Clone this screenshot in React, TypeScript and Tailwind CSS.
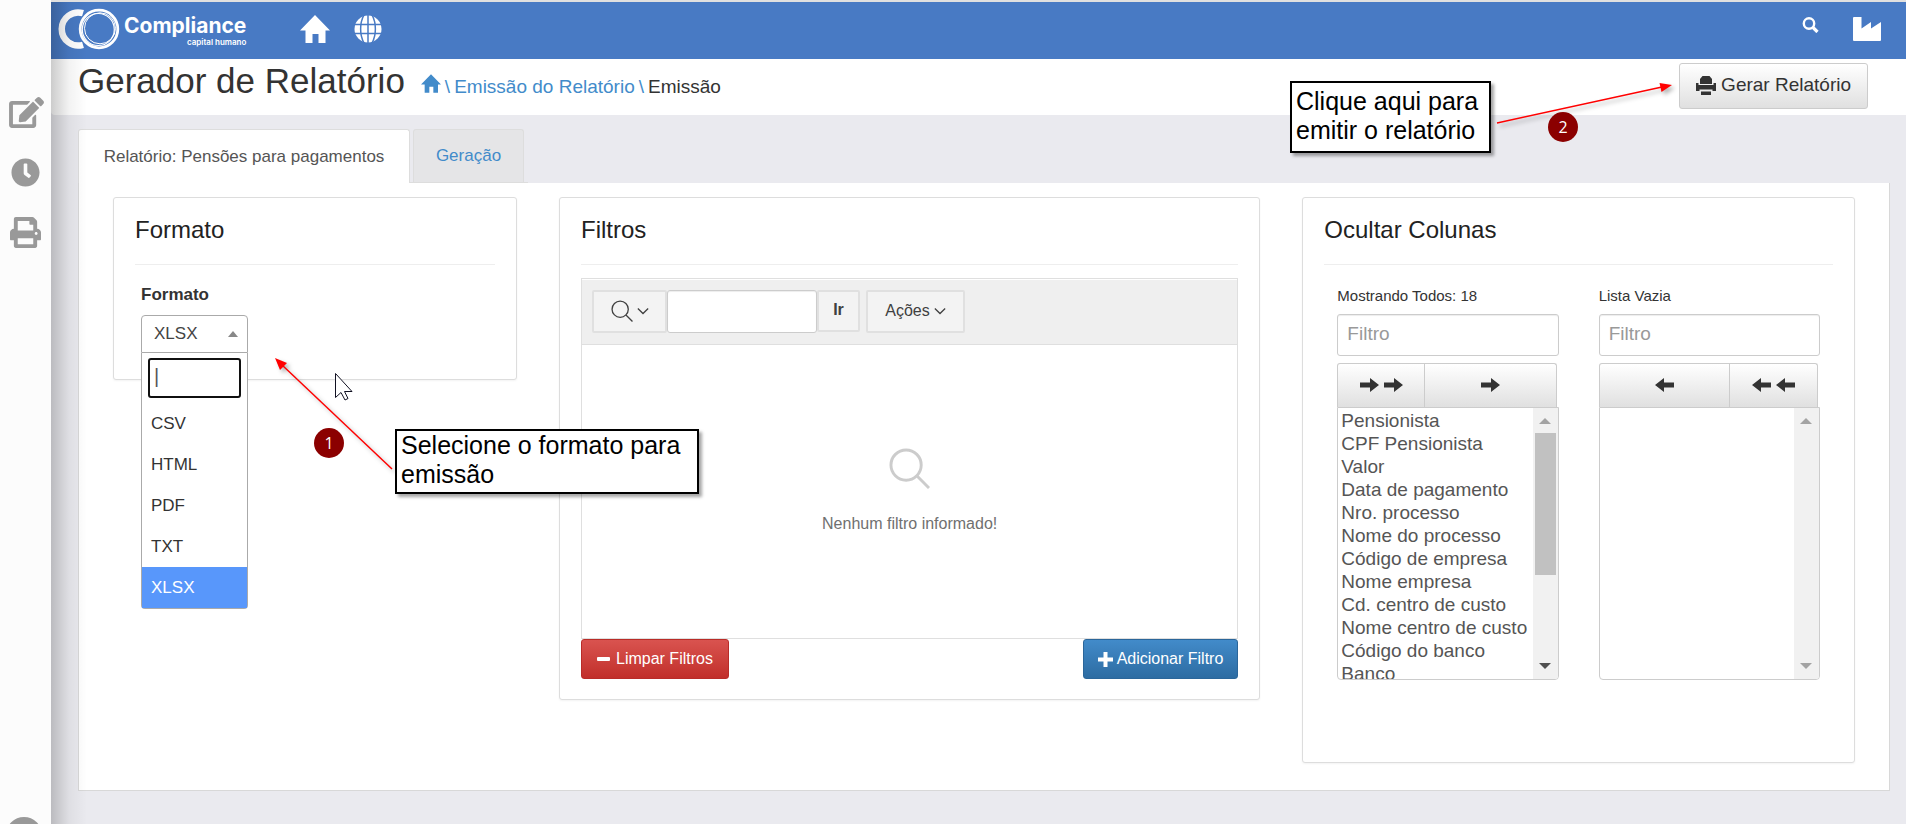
import { useState } from "react";
import type { ReactNode } from "react";
import { FaClock, FaEdit, FaPrint } from "react-icons/fa";

const formats = ["CSV", "HTML", "PDF", "TXT", "XLSX"];

const columns = [
  "Pensionista",
  "CPF Pensionista",
  "Valor",
  "Data de pagamento",
  "Nro. processo",
  "Nome do processo",
  "Código de empresa",
  "Nome empresa",
  "Cd. centro de custo",
  "Nome centro de custo",
  "Código do banco",
  "Banco",
];

const HomeIcon = ({ className }: { className: string }) => (
  <svg viewBox="0 0 30 28" className={className} fill="currentColor" aria-hidden="true">
    <path d="M15 0 30 15.500h-4.500V28h-7v-9h-6v9h-7V15.500H0z" />
  </svg>
);

const GlobeIcon = () => (
  <svg viewBox="0 0 28 28" className="h-7 w-7" aria-hidden="true">
    <circle cx="14" cy="14" r="13.500" fill="#fff" />
    <g fill="none" stroke="#487ac4" strokeWidth="1.500">
      <path d="M14 0v28M0 9.500h28M0 18.500h28" />
      <path d="M10 0C5.500 8 5.500 20 10 28M18 0c4.500 8 4.500 20 0 28" />
    </g>
  </svg>
);

const PrinterIcon = () => (
  <svg viewBox="0 0 20 19" className="h-[19px] w-5" fill="currentColor" aria-hidden="true">
    <path d="M6.500 0h7L16 3v5H4V3z" />
    <path d="M0 7h2.500v2h15V7H20v8h-3.500v-1.500h-13V15H0z" />
    <path d="M5 15.500h10V19H5z" />
  </svg>
);

const Magnifier = ({ className, stroke }: { className: string; stroke: number }) => (
  <svg viewBox="0 0 42 42" className={className} fill="none" stroke="currentColor" strokeWidth={stroke} aria-hidden="true">
    <circle cx="17.500" cy="17.500" r="15.500" />
    <path d="M28.500 28.500 41 41" />
  </svg>
);

const Chevron = () => (
  <svg viewBox="0 0 14 8" className="h-2 w-3" fill="none" stroke="currentColor" strokeWidth="1.500" aria-hidden="true">
    <path d="m1 1 6 6 6-6" />
  </svg>
);

const BlockArrow = ({ left }: { left?: boolean }) => (
  <svg viewBox="0 0 19 14" className="h-3.5 w-[19px]" fill="currentColor" aria-hidden="true">
    {left ? <path d="M19 4.500H9V0L0 7l9 7V9.500h10z" /> : <path d="M0 4.500h10V0l9 7-9 7V9.500H0z" />}
  </svg>
);

const Logo = () => (
  <a href="#" className="flex items-start text-white" aria-label="Compliance capital humano">
    <svg viewBox="0 0 62 42" className="h-[42px] w-[62px]" fill="none" stroke="currentColor" aria-hidden="true">
      <path d="M25 5.200A16.500 16.500 0 1 0 25 36.800" strokeWidth="6.500" />
      <circle cx="41" cy="21" r="20.500" fill="#487ac4" stroke="none" />
      <circle cx="41" cy="21" r="18.800" strokeWidth="2.800" />
      <circle cx="40.300" cy="21.500" r="16" strokeWidth="1.200" />
      <circle cx="42" cy="20.300" r="15.500" strokeWidth="1" />
    </svg>
    <span className="mt-[5px] ml-1 flex flex-col items-end font-['Inter']">
      <span className="text-[21px] leading-[25px] font-bold">Compliance</span>
      <span className="text-[8px] leading-2 font-semibold">capital humano</span>
    </span>
  </a>
);

const Card = ({ title, className, children }: { title: string; className: string; children: ReactNode }) => (
  <section className={`rounded-[3px] border border-[#dddddd] bg-white px-[21px] pt-4 shadow-xs ${className}`}>
    <h2 className="text-2xl text-[#222]">{title}</h2>
    <hr className="mt-[18px] border-[#eeeeee]" />
    {children}
  </section>
);

const ListBox = ({ label, items }: { label: string; items: string[] }) => (
  <div className="flex h-[273px] overflow-hidden rounded-b-[4px] border border-[#cccccc]">
    <select
      multiple
      aria-label={label}
      className="h-full min-w-0 flex-1 appearance-none overflow-hidden bg-none pt-0.5 text-[19px] text-[#555] outline-none"
    >
      {items.map((item) => (
        <option key={item} className="h-[23px] p-0 pl-[3px] leading-[23px]">
          {item}
        </option>
      ))}
    </select>
    <div className="flex w-[25px] flex-col items-center bg-[#f1f1f1]" aria-hidden="true">
      <svg viewBox="0 0 12 6" className="mt-2.5 h-1.5 w-3" fill="#a3a3a3">
        <path d="M6 0l6 6H0z" />
      </svg>
      {items.length > 0 && <div className="mt-[9px] h-[142px] w-[21px] bg-[#c1c1c1]" />}
      <svg viewBox="0 0 12 6" className="mt-auto mb-2.5 h-1.5 w-3" fill={items.length > 0 ? "#505050" : "#a3a3a3"}>
        <path d="M6 6 0 0h12z" />
      </svg>
    </div>
  </div>
);

const arrowButton =
  "flex items-center justify-center gap-[5px] border-[#cccccc] bg-linear-to-b from-white to-[#e0e0e0] pb-0.5 text-[#333]";
const filterInput =
  "mt-2 h-[42px] w-full rounded-[3px] border border-[#cccccc] bg-white px-[9px] pb-0.5 text-[19px] text-[#555] shadow-[inset_0_1px_1px_rgba(0,0,0,0.075)] outline-none placeholder:text-[#999]";
const toolbarButton =
  "flex items-center rounded-[2px] border-2 border-[#e0e0e0] bg-[#f3f3f3] pb-0.5 text-base text-[#404040]";

const Callout = ({ className, children }: { className: string; children: ReactNode }) => (
  <div
    className={`absolute border-2 border-black bg-white pl-1 text-[25px] leading-[29px] text-black shadow-[3px_3px_3px_rgba(0,0,0,0.35)] ${className}`}
  >
    {children}
  </div>
);

const Step = ({ className, children }: { className: string; children: ReactNode }) => (
  <div
    className={`absolute flex h-[30px] w-[30px] items-center justify-center rounded-full bg-[#8b0000] font-['Open_Sans'] text-base text-white ${className}`}
  >
    {children}
  </div>
);

const Sidebar = () => (
  <aside className="relative flex w-[51px] shrink-0 flex-col items-center bg-[#fcfcfc] pt-[97px] text-[#999]">
    <nav className="flex flex-col items-center gap-[30px]">
      <a href="#" aria-label="Editar">
        <FaEdit className="ml-0.5 h-[31px] w-[35px]" />
      </a>
      <a href="#" aria-label="Histórico">
        <FaClock className="h-[29px] w-[29px]" />
      </a>
      <a href="#" aria-label="Imprimir">
        <FaPrint className="h-[31px] w-[31px]" />
      </a>
    </nav>
    <div className="mt-auto mr-1 h-[7px] w-9 overflow-hidden">
      <div className="h-9 w-9 rounded-full bg-[#999]" />
    </div>
    <div className="pointer-events-none absolute top-0.5 bottom-0 left-full z-10 w-9 bg-linear-to-r from-black/20 via-black/5 to-transparent" />
  </aside>
);

export default function App() {
  const [format, setFormat] = useState("XLSX");

  return (
    <div className="relative flex min-h-screen overflow-hidden bg-[#eaeaef] font-['Liberation_Sans',Arial,sans-serif] text-[#333]">
      <Sidebar />

      <div className="min-w-0 flex-1 border-t-2 border-[#e0e0e0]">
        <header className="flex h-[57px] items-start bg-[#487ac4] pr-[25px] pl-[7px] text-white">
          <div className="pt-1.5">
            <Logo />
          </div>
          <a href="#" className="mt-[13px] ml-[54px]" aria-label="Início">
            <HomeIcon className="h-7 w-[30px]" />
          </a>
          <a href="#" className="mt-[13px] ml-6" aria-label="Idioma">
            <GlobeIcon />
          </a>
          <button type="button" className="mt-[15px] ml-auto" aria-label="Pesquisar">
            <svg viewBox="0 0 17 16" className="h-4 w-[17px]" fill="none" stroke="currentColor" aria-hidden="true">
              <circle cx="7" cy="6.500" r="5.200" strokeWidth="2.400" />
              <path d="m11 10.500 4.500 4.500" strokeWidth="3.200" />
            </svg>
          </button>
          <a href="#" className="mt-[15px] ml-[34px]" aria-label="Empresa">
            <svg viewBox="0 0 28 24" className="h-6 w-7" fill="currentColor" aria-hidden="true">
              <path d="M1 0h7.500v11.500L18 5v6.500L28 5v18a1 1 0 0 1-1 1H1a1 1 0 0 1-1-1V1a1 1 0 0 1 1-1z" />
            </svg>
          </a>
        </header>

        <div className="flex h-14 items-start rounded-bl-[4px] bg-white pr-[38px] pl-[27px]">
          <div className="flex items-baseline">
            <h1 className="text-[35px] leading-[44px] text-[#333]">Gerador de Relatório</h1>
            <nav className="ml-4 flex items-baseline gap-1 text-[19px] text-[#428bca]">
              <a href="#" aria-label="Início">
                <HomeIcon className="h-[19px] w-5" />
              </a>
              <span>\</span>
              <a href="#">Emissão do Relatório</a>
              <span>\</span>
              <span className="text-[#333]">Emissão</span>
            </nav>
          </div>
          <button
            type="button"
            className="mt-1 ml-auto flex h-[46px] items-center gap-[5px] rounded-[3px] border border-[#cccccc] bg-linear-to-b from-white to-[#e0e0e0] px-4 pb-0.5 text-[19px] text-[#333]"
          >
            <PrinterIcon />
            Gerar Relatório
          </button>
        </div>

        <main className="pt-3.5 pr-4 pb-8 pl-[27px]">
          <div role="tablist" className="flex w-fit gap-[3px] border-b border-[#dddddd] pr-1">
            <button
              type="button"
              role="tab"
              aria-selected="true"
              className="-mb-px h-[54px] w-[332px] rounded-t-[3px] border border-b-0 border-[#dddddd] bg-white text-[17px] text-[#555]"
            >
              Relatório: Pensões para pagamentos
            </button>
            <button
              type="button"
              role="tab"
              aria-selected="false"
              className="h-[53px] w-[111px] rounded-t-[3px] border border-b-0 border-[#dddddd] bg-[#e5e5e7] text-[17px] text-[#428bca]"
            >
              Geração
            </button>
          </div>

          <div className="grid grid-cols-12 items-start gap-[42px] border border-t-0 border-[#d8d8d8] bg-white px-[34px] pt-3.5 pb-[27px]">
            <Card title="Formato" className="col-span-3 pb-[26px]">
              <div className="px-1.5">
                <label htmlFor="format" className="mt-[18px] block text-[17px] leading-6 font-bold">
                  Formato
                </label>
                <div className="relative mt-2 w-[107px]">
                  <select
                    id="format"
                    value={format}
                    onChange={(e) => setFormat(e.target.value)}
                    className="block h-[38px] w-full appearance-none rounded-t-[4px] border border-[#aaaaaa] bg-white pl-3 text-[17px] text-[#444] outline-none"
                  >
                    {formats.map((item) => (
                      <option key={item}>{item}</option>
                    ))}
                  </select>
                  <svg viewBox="0 0 10 6" className="absolute top-4 right-2.5 h-1.5 w-2.5" fill="#888" aria-hidden="true">
                    <path d="M5 0l5 6H0z" />
                  </svg>
                  <div className="absolute top-full left-0 z-20 w-full rounded-b-[4px] border border-t-0 border-[#aaaaaa] bg-white">
                    <div className="px-1.5 py-[5px]">
                      <input
                        type="text"
                        defaultValue="|"
                        aria-label="Buscar formato"
                        className="h-10 w-full rounded-[3px] border-2 border-[#101010] bg-white px-1 pb-1 text-xl font-light text-[#555] outline-none"
                      />
                    </div>
                    <ul role="listbox" aria-label="Formato">
                      {formats.map((item) => (
                        <li
                          key={item}
                          role="option"
                          aria-selected={item === format}
                          onClick={() => setFormat(item)}
                          className={`h-[41px] pl-[9px] text-[17px] leading-[41px] ${
                            item === format ? "bg-[#5897fb] text-white" : "text-[#333]"
                          }`}
                        >
                          {item}
                        </li>
                      ))}
                    </ul>
                  </div>
                </div>
              </div>
            </Card>

            <Card title="Filtros" className="col-span-5 pb-5">
              <div className="mt-[13px] border border-[#dfdfdf] pt-px">
                <div className="flex h-[65px] items-start border-b border-[#dfdfdf] bg-[#efefef] pt-2.5 pl-2.5">
                  <button type="button" className={`h-[43px] w-[75px] justify-center gap-1 ${toolbarButton}`} aria-label="Selecionar colunas">
                    <Magnifier className="h-[22px] w-[22px]" stroke={2.5} />
                    <Chevron />
                  </button>
                  <input
                    type="text"
                    aria-label="Pesquisar filtros"
                    className="h-[43px] w-[150px] rounded-[3px] border border-[#cccccc] bg-white px-2 shadow-[inset_0_1px_1px_rgba(0,0,0,0.075)] outline-none"
                  />
                  <button type="button" className={`h-[42px] w-[43px] justify-center font-bold ${toolbarButton}`}>
                    Ir
                  </button>
                  <button type="button" className={`ml-1.5 h-[43px] w-[99px] justify-center gap-1 ${toolbarButton}`}>
                    Ações
                    <Chevron />
                  </button>
                </div>
                <div className="flex h-[293px] flex-col items-center pt-[103px]">
                  <Magnifier className="h-[41px] w-[41px] text-[#ccc]" stroke={3} />
                  <p className="mt-[23px] text-base text-[#707070]">Nenhum filtro informado!</p>
                </div>
              </div>
              <div className="flex justify-between text-base text-white">
                <button
                  type="button"
                  className="flex h-10 items-center gap-1.5 rounded-[3px] border border-[#b92c28] bg-linear-to-b from-[#d9534f] to-[#c12e2a] px-[15px]"
                >
                  <span className="h-1 w-[13px] rounded-[1px] bg-white" />
                  Limpar Filtros
                </button>
                <button
                  type="button"
                  className="flex h-10 items-center gap-1 rounded-[3px] border border-[#2b669a] bg-linear-to-b from-[#428bca] to-[#2d6ca2] px-3.5"
                >
                  <svg viewBox="0 0 15 15" className="h-[15px] w-[15px]" fill="currentColor" aria-hidden="true">
                    <path d="M5.500 0h4v5.500H15v4H9.500V15h-4V9.500H0v-4h5.500z" />
                  </svg>
                  Adicionar Filtro
                </button>
              </div>
            </Card>

            <Card title="Ocultar Colunas" className="col-span-4 pb-[82px]">
              <div className="grid grid-cols-2 gap-10 px-[13px] pt-[21px]">
                <div>
                  <label htmlFor="filter-shown" className="block text-[15px] leading-5">
                    Mostrando Todos: 18
                  </label>
                  <input id="filter-shown" type="text" placeholder="Filtro" className={filterInput} />
                  <div className="mt-[7px] mr-0.5 flex h-11">
                    <button type="button" className={`w-2/5 rounded-tl-[3px] border border-b-0 ${arrowButton}`} aria-label="Mover todos">
                      <BlockArrow />
                      <BlockArrow />
                    </button>
                    <button type="button" className={`w-3/5 rounded-tr-[3px] border border-b-0 border-l-0 ${arrowButton}`} aria-label="Mover">
                      <BlockArrow />
                    </button>
                  </div>
                  <ListBox label="Colunas visíveis" items={columns} />
                </div>
                <div>
                  <label htmlFor="filter-hidden" className="block text-[15px] leading-5">
                    Lista Vazia
                  </label>
                  <input id="filter-hidden" type="text" placeholder="Filtro" className={filterInput} />
                  <div className="mt-[7px] mr-0.5 flex h-11">
                    <button type="button" className={`w-3/5 rounded-tl-[3px] border border-b-0 ${arrowButton}`} aria-label="Remover">
                      <BlockArrow left />
                    </button>
                    <button type="button" className={`w-2/5 rounded-tr-[3px] border border-b-0 border-l-0 ${arrowButton}`} aria-label="Remover todos">
                      <BlockArrow left />
                      <BlockArrow left />
                    </button>
                  </div>
                  <ListBox label="Colunas ocultas" items={[]} />
                </div>
              </div>
            </Card>
          </div>
        </main>
      </div>

      {/* tutorial notes drawn over the page */}
      <div className="pointer-events-none absolute inset-0 z-30">
        <svg viewBox="0 0 124 117" className="absolute top-[356px] left-[273px] h-[117px] w-[124px] drop-shadow-[3px_3px_2px_rgba(0,0,0,0.3)]" aria-hidden="true">
          <path d="M119 113 8 8" stroke="#f00" strokeWidth="1.500" />
          <path d="m2 2 12 5-7 7z" fill="#f00" />
        </svg>
        <svg viewBox="0 0 20 30" className="absolute top-[372px] left-[334px] h-[30px] w-5" aria-hidden="true">
          <path d="M1.500 1.500v24l5.500-5 4 7.500 3-1.500-3.500-7h7.500z" fill="#fff" stroke="#112" strokeWidth="1" />
        </svg>
        <Step className="top-[428px] left-[314px]">1</Step>
        <Callout className="top-[429px] left-[395px] h-[65px] w-[304px]">
          Selecione o formato para
          <br />
          emissão
        </Callout>

        <svg viewBox="0 0 180 44" className="absolute top-[81px] right-[232px] h-11 w-[180px] drop-shadow-[3px_3px_2px_rgba(0,0,0,0.3)]" aria-hidden="true">
          <path d="M3 42 168 6" stroke="#f00" strokeWidth="1.500" />
          <path d="m178 4-10.500 7-2-9z" fill="#f00" />
        </svg>
        <Step className="top-[112px] right-[328px]">2</Step>
        <Callout className="top-[81px] right-[415px] h-[72px] w-[201px] pt-1">
          Clique aqui para
          <br />
          emitir o relatório
        </Callout>
      </div>
    </div>
  );
}
